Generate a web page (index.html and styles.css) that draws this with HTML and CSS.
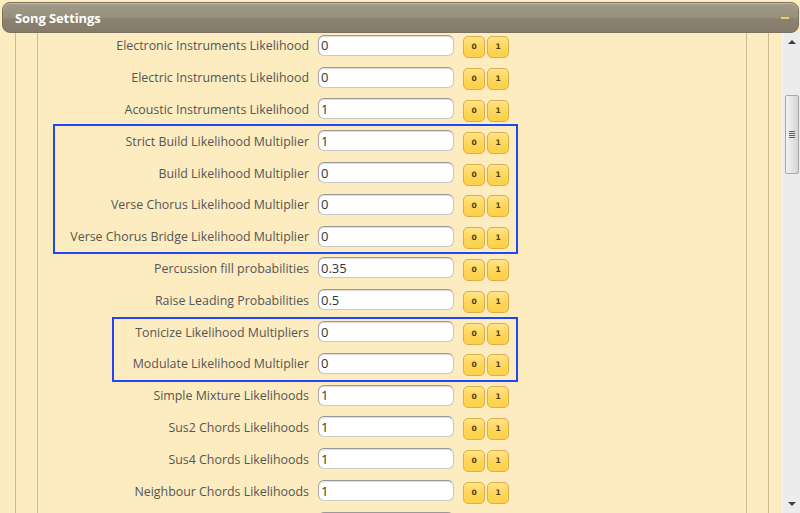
FILE: index.html
```html
<!DOCTYPE html>
<html>
<head>
<meta charset="utf-8">
<link rel="stylesheet" href="styles.css">
</head>
<body>
<div class="page">
  <div class="header">
    <span class="title">Song Settings</span>
    <span class="collapse"></span>
  </div>
  <div class="body">
    <div class="content">
      <div class="frame-outer">
        <div class="frame-inner">
          <div class="list">
            <div class="row"><label class="lbl">Electronic Instruments Likelihood</label><input class="field" value="0"><div class="btns"><button class="btn">0</button><button class="btn">1</button></div></div>
            <div class="row"><label class="lbl">Electric Instruments Likelihood</label><input class="field" value="0"><div class="btns"><button class="btn">0</button><button class="btn">1</button></div></div>
            <div class="row"><label class="lbl">Acoustic Instruments Likelihood</label><input class="field" value="1"><div class="btns"><button class="btn">0</button><button class="btn">1</button></div></div>
            <div class="row"><label class="lbl">Strict Build Likelihood Multiplier</label><input class="field" value="1"><div class="btns"><button class="btn">0</button><button class="btn">1</button></div></div>
            <div class="row"><label class="lbl">Build Likelihood Multiplier</label><input class="field" value="0"><div class="btns"><button class="btn">0</button><button class="btn">1</button></div></div>
            <div class="row"><label class="lbl">Verse Chorus Likelihood Multiplier</label><input class="field" value="0"><div class="btns"><button class="btn">0</button><button class="btn">1</button></div></div>
            <div class="row"><label class="lbl">Verse Chorus Bridge Likelihood Multiplier</label><input class="field" value="0"><div class="btns"><button class="btn">0</button><button class="btn">1</button></div></div>
            <div class="row"><label class="lbl">Percussion fill probabilities</label><input class="field" value="0.35"><div class="btns"><button class="btn">0</button><button class="btn">1</button></div></div>
            <div class="row"><label class="lbl">Raise Leading Probabilities</label><input class="field" value="0.5"><div class="btns"><button class="btn">0</button><button class="btn">1</button></div></div>
            <div class="row"><label class="lbl">Tonicize Likelihood Multipliers</label><input class="field" value="0"><div class="btns"><button class="btn">0</button><button class="btn">1</button></div></div>
            <div class="row"><label class="lbl">Modulate Likelihood Multiplier</label><input class="field" value="0"><div class="btns"><button class="btn">0</button><button class="btn">1</button></div></div>
            <div class="row"><label class="lbl">Simple Mixture Likelihoods</label><input class="field" value="1"><div class="btns"><button class="btn">0</button><button class="btn">1</button></div></div>
            <div class="row"><label class="lbl">Sus2 Chords Likelihoods</label><input class="field" value="1"><div class="btns"><button class="btn">0</button><button class="btn">1</button></div></div>
            <div class="row"><label class="lbl">Sus4 Chords Likelihoods</label><input class="field" value="1"><div class="btns"><button class="btn">0</button><button class="btn">1</button></div></div>
            <div class="row"><label class="lbl">Neighbour Chords Likelihoods</label><input class="field" value="1"><div class="btns"><button class="btn">0</button><button class="btn">1</button></div></div>
            <div class="row"><span class="lbl"></span><input class="field" value=""></div>
          </div>
        </div>
      </div>
    </div>
    <div class="scrollbar">
      <div class="arrow up"></div>
      <div class="track">
        <div class="thumb"><span class="grip"></span><span class="grip"></span><span class="grip"></span><span class="grip"></span></div>
      </div>
      <div class="arrow down"></div>
    </div>
  </div>
  <div class="highlight hl-a"></div>
  <div class="highlight hl-b"></div>
</div>
</body>
</html>
```

FILE: styles.css
```css
html, body {
  margin: 0;
  padding: 0;
  background: #fdecc0;
}

.page {
  position: relative;
  width: 800px;
  height: 513px;
  overflow: hidden;
  background: #fdecc0;
  font-family: "Open Sans", "Liberation Sans", sans-serif;
  display: flex;
  flex-direction: column;
}

.header {
  position: relative;
  z-index: 2;
  flex: none;
  height: 29px;
  margin: 2px 1px 0 2px;
  border: 1px solid #7a7160;
  border-radius: 8px;
  background: linear-gradient(to bottom, #a39b8a 0%, #978f7d 50%, #8a8170 55%, #857b6a 100%);
  box-shadow: inset 0 1px 0 #c2bba8;
  display: flex;
  align-items: center;
  justify-content: space-between;
  padding: 0 9px 0 12px;
}

.title {
  color: #ffffff;
  font-weight: 700;
  font-size: 13px;
  letter-spacing: -0.1px;
}

.collapse {
  width: 8px;
  height: 2px;
  background: #f3cd5c;
}

.body {
  flex: 1;
  display: flex;
  min-height: 0;
  margin-top: -2px;
}

.content {
  flex: 1;
  min-width: 0;
  overflow: hidden;
  padding-left: 15px;
  padding-right: 13px;
}

.frame-outer {
  height: 100%;
  border-left: 1px solid #c9b890;
  border-right: 1px solid #c9b890;
  padding-left: 21px;
  padding-right: 21px;
  box-sizing: border-box;
}

.frame-inner {
  height: 100%;
  border-left: 1px solid #c9b890;
  border-right: 1px solid #c9b890;
  box-sizing: border-box;
  overflow: hidden;
}

.list {
  margin-top: -1px;
}

.row {
  height: 31.8px;
  display: flex;
  align-items: center;
}

.lbl {
  width: 280px;
  flex: none;
  padding-right: 9px;
  box-sizing: border-box;
  text-align: right;
  white-space: nowrap;
  font-size: 12.4px;
  color: #555555;
}

.field {
  width: 136px;
  height: 21px;
  box-sizing: border-box;
  border: 1px solid #c8c8c8;
  border-top-color: #9a9a9a;
  border-left-color: #a8a8a8;
  border-radius: 6px;
  background: #ffffff;
  box-shadow: inset 0 1px 1px rgba(0,0,0,0.15);
  padding: 0 2px;
  font-family: "Open Sans", "Liberation Sans", sans-serif;
  font-size: 13px;
  color: #333333;
  margin: -1px 0 0 0;
  outline: none;
}

.btns {
  display: flex;
  gap: 2px;
  margin-left: 9px;
  margin-top: 3px;
}

.btn {
  width: 22px;
  height: 22px;
  padding: 0;
  border: 1px solid #dcae45;
  border-radius: 5px;
  background: linear-gradient(to bottom, #ffe58a 0%, #fed65a 50%, #fcd048 100%);
  font-family: "DejaVu Sans", sans-serif;
  font-weight: 700;
  font-size: 7.5px;
  color: #4a3d1a;
  line-height: 20px;
  text-align: center;
}

.scrollbar {
  flex: none;
  width: 17px;
  background: #ececec;
  border-left: 1px solid #f6f6f6;
  display: flex;
  flex-direction: column;
  align-items: center;
  padding-top: 2px;
}

.arrow {
  width: 0;
  height: 0;
  border-left: 4px solid transparent;
  border-right: 4px solid transparent;
  margin: 7px 0;
}

.arrow.up {
  border-bottom: 4px solid #404040;
}

.arrow.down {
  border-top: 4px solid #404040;
  margin-top: 5px;
  margin-bottom: 7px;
}

.track {
  flex: 1;
  width: 100%;
  display: flex;
  justify-content: center;
}

.thumb {
  margin-top: 44px;
  width: 14px;
  height: 79px;
  box-sizing: border-box;
  border: 1px solid #a8a8a8;
  border-radius: 2px;
  background: linear-gradient(to right, #f4f4f4 0%, #e4e4e4 50%, #d4d4d4 100%);
  display: flex;
  flex-direction: column;
  align-items: center;
  justify-content: center;
  gap: 1px;
}

.grip {
  width: 6px;
  height: 1px;
  background: #606060;
}

.highlight {
  position: absolute;
  z-index: 3;
  border: 2px solid #2046f5;
  box-sizing: border-box;
  pointer-events: none;
}

.hl-a {
  left: 53px;
  top: 124px;
  width: 465px;
  height: 130px;
}

.hl-b {
  left: 112px;
  top: 317px;
  width: 406px;
  height: 65px;
}
```
